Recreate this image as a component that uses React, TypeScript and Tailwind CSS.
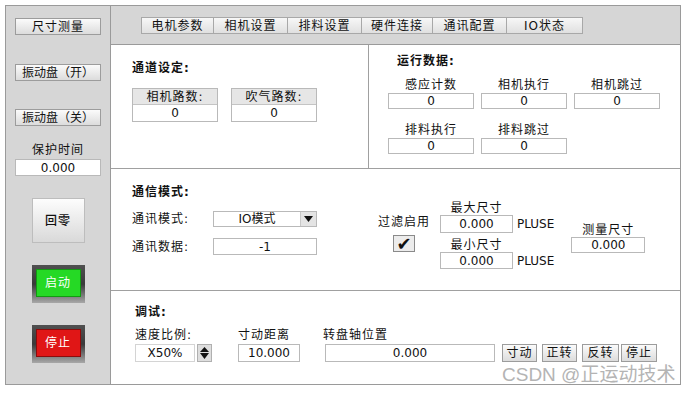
import React from 'react';

const Btn = ({ label, className = '' }: { label: string; className?: string }) => (
  <div
    className={`flex items-center justify-center border border-[#9c9c9c] bg-linear-to-b from-[#fbfbfb] to-[#dcdcdc] text-[12px] leading-none ${className}`}
  >
    {label}
  </div>
);

const Box = ({ value, className = '' }: { value: string; className?: string }) => (
  <div className={`flex items-center justify-center border border-[#b9b9b9] bg-white text-[12px] leading-none ${className}`}>
    {value}
  </div>
);

const Label = ({ text, className = '' }: { text: string; className?: string }) => (
  <div className={`text-[12px] leading-[14px] tracking-[1px] ${className}`}>{text}</div>
);

const Title = ({ text, className = '' }: { text: string; className?: string }) => (
  <div className={`text-[12px] font-bold leading-[14px] tracking-[1px] ${className}`}>{text}</div>
);

const BigBtn = ({ label, inner }: { label: string; inner: string }) => (
  <div className="mt-[22px] h-[38px] w-[53px] bg-linear-to-b from-[#505050] via-[#3a3a3a] to-[#a8a8a8] px-[4px] pt-[4px] pb-[6px]">
    <div className={`flex h-full items-center justify-center border text-[12px] tracking-[1px] text-white ${inner}`}>{label}</div>
  </div>
);

const tabs = [
  { t: '电机参数', w: 'w-[73px] border-l' },
  { t: '相机设置', w: 'w-[74px]' },
  { t: '排料设置', w: 'w-[74px]' },
  { t: '硬件连接', w: 'w-[71px]' },
  { t: '通讯配置', w: 'w-[74px]' },
  { t: 'IO状态', w: 'w-[76px]' },
];

const runData = ['感应计数', '相机执行', '相机跳过', '排料执行', '排料跳过'];

const Down = () => (
  <svg width="9" height="6" viewBox="0 0 9 6">
    <path d="M0 0h9L4.5 6z" fill="#111" />
  </svg>
);

const Up = () => (
  <svg width="9" height="5" viewBox="0 0 9 5">
    <path d="M0 5h9L4.5 0z" fill="#111" />
  </svg>
);

export default function App() {
  return (
    <div className="relative h-[393px] w-[688px] overflow-hidden bg-white font-['DejaVu_Sans','Noto_Sans_CJK_SC',sans-serif] text-[#111]">
      <div className="ml-[5px] pt-[5px]">
        <div className="flex h-[380px] w-[676px] border border-[#9a9a9a]">
          {/* sidebar */}
          <div className="flex w-[105px] flex-col items-center border-r border-[#9a9a9a] bg-[#d6d6d6]">
            <Btn label="尺寸测量" className="mt-[12px] h-[17px] w-[86px] tracking-[1px]" />
            <Btn label="振动盘（开）" className="mt-[29px] h-[17px] w-[86px]" />
            <Btn label="振动盘（关）" className="mt-[28px] h-[17px] w-[86px]" />
            <Label text="保护时间" className="mt-[17px]" />
            <Box value="0.000" className="mt-[2px] h-[17px] w-[86px]" />
            <div className="mt-[22px] flex h-[45px] w-[53px] items-center justify-center border border-[#bdbdbd] bg-linear-to-b from-[#fdfdfd] to-[#d9d9d9] text-[12px] font-medium tracking-[1px]">
              回零
            </div>
            <BigBtn label="启动" inner="border-[#119a11] bg-[#25d925]" />
            <BigBtn label="停止" inner="border-[#8c0b0b] bg-[#e01616]" />
          </div>

          {/* main */}
          <div className="flex flex-1 flex-col">
            <div className="h-[39px] border-b border-[#9a9a9a] bg-[#d6d6d6] pl-[30px] pt-[11px]">
              <div className="flex">
                {tabs.map((x) => (
                  <div
                    key={x.t}
                    className={`flex h-[17px] items-center justify-center border-y border-r border-[#a8a8a8] bg-linear-to-b from-[#f7f7f7] to-[#e0e0e0] text-[12px] leading-none tracking-[1px] ${x.w}`}
                  >
                    {x.t}
                  </div>
                ))}
              </div>
            </div>

            {/* section 1 */}
            <div className="flex h-[124px] border-b border-[#a0a0a0]">
              <div className="w-[258px] border-r border-[#a0a0a0] pl-[21px] pt-[16px]">
                <Title text="通道设定:" />
                <div className="mt-[13px] flex gap-[13px]">
                  {['相机路数:', '吹气路数:'].map((t) => (
                    <div key={t} className="w-[86px] border border-[#b9b9b9]">
                      <div className="flex h-[16px] items-center justify-center border-b border-[#c4c4c4] bg-[#e6e6e6] text-[12px] leading-none tracking-[1px]">
                        {t}
                      </div>
                      <div className="flex h-[16px] items-center justify-center bg-white text-[12px] leading-none">0</div>
                    </div>
                  ))}
                </div>
              </div>
              <div className="flex-1 pt-[9px]">
                <Title text="运行数据:" className="pl-[28px]" />
                <div className="mt-[10px] grid grid-cols-[86px_86px_86px] gap-x-[7px] gap-y-[14px] pl-[19px]">
                  {runData.map((t) => (
                    <div key={t} className="flex flex-col items-center">
                      <Label text={t} />
                      <Box value="0" className="mt-[1px] h-[16px] w-[86px]" />
                    </div>
                  ))}
                </div>
              </div>
            </div>

            {/* section 2 */}
            <div className="flex h-[122px] border-b border-[#a0a0a0]">
              <div className="w-[258px] pl-[21px] pt-[16px]">
                <Title text="通信模式:" />
                <div className="mt-[12px] flex items-center">
                  <Label text="通讯模式:" className="w-[81px]" />
                  <div className="flex h-[16px] w-[104px] border border-[#b9b9b9] bg-white">
                    <div className="flex flex-1 items-center justify-center text-[12px] leading-none">IO模式</div>
                    <div className="flex w-[16px] items-center justify-center border-l border-[#c8c8c8] bg-[#e4e4e4]">
                      <Down />
                    </div>
                  </div>
                </div>
                <div className="mt-[11px] flex items-center">
                  <Label text="通讯数据:" className="w-[81px]" />
                  <Box value="-1" className="h-[17px] w-[104px]" />
                </div>
              </div>
              <div className="flex pl-[9px]">
                <div className="mt-[46px] flex w-[52px] flex-col items-center">
                  <Label text="过滤启用" />
                  <div className="mt-[6px] flex h-[17px] w-[22px] items-center justify-center border border-[#8a8a8a] bg-[#ececec] text-[18px] font-bold leading-none">
                    ✔
                  </div>
                </div>
                <div className="ml-[10px] mt-[32px]">
                  <Label text="最大尺寸" className="w-[73px] text-center leading-[13px]" />
                  <div className="flex items-center">
                    <Box value="0.000" className="h-[18px] w-[73px]" />
                    <span className="ml-[4px] text-[12px] leading-none">PLUSE</span>
                  </div>
                  <Label text="最小尺寸" className="mt-[5px] w-[73px] text-center leading-[13px]" />
                  <div className="flex items-center">
                    <Box value="0.000" className="h-[17px] w-[73px]" />
                    <span className="ml-[4px] text-[12px] leading-none">PLUSE</span>
                  </div>
                </div>
                <div className="ml-[17px] mt-[54px] flex flex-col items-center">
                  <Label text="测量尺寸" />
                  <Box value="0.000" className="h-[16px] w-[74px]" />
                </div>
              </div>
            </div>

            {/* section 3 */}
            <div className="flex-1 pl-[24px] pt-[14px]">
              <Title text="调试:" />
              <div className="mt-[9px] flex items-end">
                <div>
                  <Label text="速度比例:" />
                  <div className="mt-[2px] flex h-[18px] items-center">
                    <div className="flex h-full w-[60px] items-center justify-center border border-[#d4d4d4] bg-white text-[12px] leading-none">
                      X50%
                    </div>
                    <div className="ml-[2px] flex h-full w-[15px] flex-col items-center justify-center gap-[1px] border border-[#b0b0b0] bg-[#dedede]">
                      <Up />
                      <Down />
                    </div>
                  </div>
                </div>
                <div className="ml-[26px]">
                  <Label text="寸动距离" />
                  <Box value="10.000" className="mt-[2px] h-[18px] w-[62px]" />
                </div>
                <div className="ml-[23px]">
                  <Label text="转盘轴位置" />
                  <Box value="0.000" className="ml-[2px] mt-[2px] h-[18px] w-[170px]" />
                </div>
                <div className="ml-[7px] flex">
                  <Btn label="寸动" className="h-[18px] w-[35px] tracking-[1px]" />
                  <Btn label="正转" className="ml-[5px] h-[18px] w-[35px] tracking-[1px]" />
                  <Btn label="反转" className="ml-[5px] h-[18px] w-[37px] tracking-[1px]" />
                  <Btn label="停止" className="ml-[2px] h-[18px] w-[36px] tracking-[1px]" />
                </div>
              </div>
            </div>
          </div>
        </div>
      </div>
      <div className="absolute left-[502px] top-[365px] font-['Liberation_Sans','Noto_Sans_CJK_SC',sans-serif] text-[19px] leading-[19px] text-[#b4b4b4]">
        CSDN @正运动技术
      </div>
    </div>
  );
}
